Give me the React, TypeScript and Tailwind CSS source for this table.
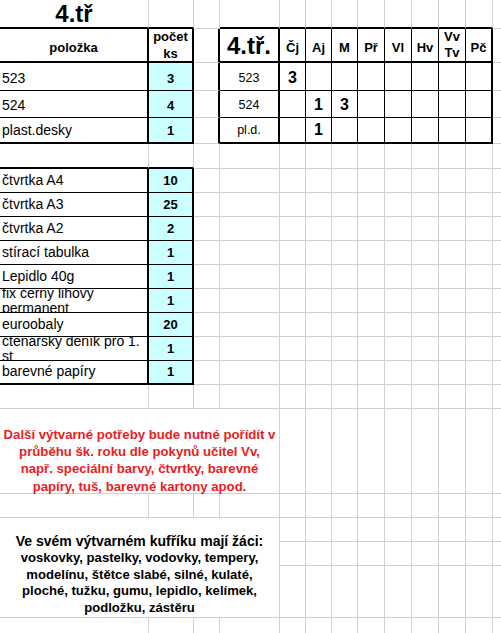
import type { ReactNode } from "react";

const COLS = 13;
const ROWS = 22;

// border pieces: g = gridline, b = thin black, B = thick black, n = none
const RIGHT = {
  g: "border-r border-r-[#d0d0d0]",
  b: "border-r border-r-black",
  B: "border-r-2 border-r-black",
  n: "",
};
const BOTTOM = {
  g: "border-b border-b-[#d0d0d0]",
  b: "border-b border-b-black",
  B: "border-b-2 border-b-black",
  n: "",
};

type Edge = keyof typeof RIGHT;

const inLeft = (c: number) => c === 0 || c === 1;
const inRight = (c: number) => c >= 3 && c <= 11;

function rightEdge(r: number, c: number): Edge {
  if (c === 12) return "n";
  if (r >= 1 && r <= 4) {
    if (c <= 3 || c === 11) return "B";
    return "b";
  }
  if (r >= 6 && r <= 14 && inLeft(c)) return "B";
  return "g";
}

function bottomEdge(r: number, c: number): Edge {
  if (r === 21) return "n";
  const top = inLeft(c) || inRight(c);
  if ((r === 0 || r === 1 || r === 4) && top) return "B";
  if ((r === 2 || r === 3) && top) return "b";
  if ((r === 5 || r === 14) && inLeft(c)) return "B";
  if (r >= 6 && r <= 13 && inLeft(c)) return "b";
  return "g";
}

function covered(r: number, c: number) {
  if (r === 16 && c >= 1 && c <= 3) return true;
  if (r >= 18 && r <= 20 && c <= 3 && !(r === 18 && c === 0)) return true;
  return false;
}

const label = "items-end pb-[4px] pl-[2px] text-[14px] leading-[15px] whitespace-nowrap";
const wrapped = "items-center pl-[2px] text-[14px] leading-[15px] whitespace-nowrap";
const count = "items-end justify-center pb-[4px] text-[13px] font-bold leading-[15px] bg-[#ccffff]";
const head = "items-end justify-center pb-[6px] text-[13px] font-bold leading-[15px]";
const head2 = "items-center justify-center text-center text-[13px] font-bold leading-[16px]";
const small = "items-end justify-center pb-[5px] text-[12.5px] leading-[14px]";
const big = "items-end justify-center pb-[3px] text-[16px] font-bold leading-[18px]";

const cells: Record<string, { content?: ReactNode; cls: string }> = {
  "0-0": { content: "4.tř", cls: "items-center justify-center text-[24px] font-bold leading-[26px]" },

  "1-0": { content: "položka", cls: head },
  "1-1": { content: <span>počet<br />ks</span>, cls: "items-center justify-center text-center text-[13px] font-bold leading-[17px]" },
  "1-3": { content: "4.tř.", cls: "items-end justify-center pb-[2px] text-[24px] font-bold leading-[26px]" },
  "1-4": { content: "Čj", cls: head },
  "1-5": { content: "Aj", cls: head },
  "1-6": { content: "M", cls: head },
  "1-7": { content: "Př", cls: head },
  "1-8": { content: "Vl", cls: head },
  "1-9": { content: "Hv", cls: head },
  "1-10": { content: <span>Vv<br />Tv</span>, cls: head2 },
  "1-11": { content: "Pč", cls: head },

  "2-0": { content: "523", cls: label },
  "2-1": { content: "3", cls: count },
  "2-3": { content: "523", cls: small },
  "2-4": { content: "3", cls: big },
  "3-0": { content: "524", cls: label },
  "3-1": { content: "4", cls: count },
  "3-3": { content: "524", cls: small },
  "3-5": { content: "1", cls: big },
  "3-6": { content: "3", cls: big },
  "4-0": { content: "plast.desky", cls: label },
  "4-1": { content: "1", cls: count },
  "4-3": { content: "pl.d.", cls: small },
  "4-5": { content: "1", cls: big },

  "6-0": { content: "čtvrtka A4", cls: label },
  "6-1": { content: "10", cls: count },
  "7-0": { content: "čtvrtka A3", cls: label },
  "7-1": { content: "25", cls: count },
  "8-0": { content: "čtvrtka A2", cls: label },
  "8-1": { content: "2", cls: count },
  "9-0": { content: "stírací tabulka", cls: label },
  "9-1": { content: "1", cls: count },
  "10-0": { content: "Lepidlo 40g", cls: label },
  "10-1": { content: "1", cls: count },
  "11-0": { content: <span>fix černý lihový<br />permanent</span>, cls: wrapped },
  "11-1": { content: "1", cls: count },
  "12-0": { content: "euroobaly", cls: label },
  "12-1": { content: "20", cls: count },
  "13-0": { content: <span>čtenářský deník pro 1.<br />st</span>, cls: wrapped },
  "13-1": { content: "1", cls: count },
  "14-0": { content: "barevné papíry", cls: label },
  "14-1": { content: "1", cls: count },

  "16-0": {
    content: (
      <>
        <span>Další výtvarné potřeby bude nutné pořídít v</span>
        <span>průběhu šk. roku dle pokynů učitel Vv,</span>
        <span>např. speciální barvy, čtvrtky, barevné</span>
        <span>papíry, tuš, barevné kartony apod.</span>
      </>
    ),
    cls: "col-span-4 flex-col items-center pt-[17px] text-[13.2px] font-bold leading-[17.2px] text-[#ea1c24] whitespace-nowrap overflow-visible",
  },
  "18-0": {
    content: (
      <>
        <span className="text-[14px] leading-[17px]">Ve svém výtvarném kufříku mají žáci:</span>
        <span>voskovky, pastelky, vodovky, tempery,</span>
        <span>modelínu, štětce slabé, silné, kulaté,</span>
        <span>ploché, tužku, gumu, lepidlo, kelímek,</span>
        <span>podložku, zástěru</span>
      </>
    ),
    cls: "col-span-4 row-span-3 flex-col items-center pt-[15px] text-[13.1px] font-bold leading-[16.7px] whitespace-nowrap",
  },
};

export default function App() {
  const out: ReactNode[] = [];
  for (let r = 0; r < ROWS; r++) {
    for (let c = 0; c < COLS; c++) {
      if (covered(r, c)) continue;
      const cell = cells[`${r}-${c}`];
      out.push(
        <div
          key={`${r}-${c}`}
          className={`flex min-w-0 overflow-hidden ${RIGHT[rightEdge(r, c)]} ${BOTTOM[bottomEdge(r, c)]} ${cell ? cell.cls : ""}`}
        >
          {cell?.content}
        </div>
      );
    }
  }

  return (
    <div className="grid h-[633px] w-full overflow-hidden bg-white font-['Liberation_Sans',Arial,sans-serif] text-black grid-cols-[149px_45px_26px_60px_26px_26px_26px_27px_27px_27px_27px_27px_1fr] grid-rows-[29px_34px_28px_27px_26px_25px_repeat(10,24px)_85px_24px_24px_24px_52px_1fr]">
      {out}
    </div>
  );
}
